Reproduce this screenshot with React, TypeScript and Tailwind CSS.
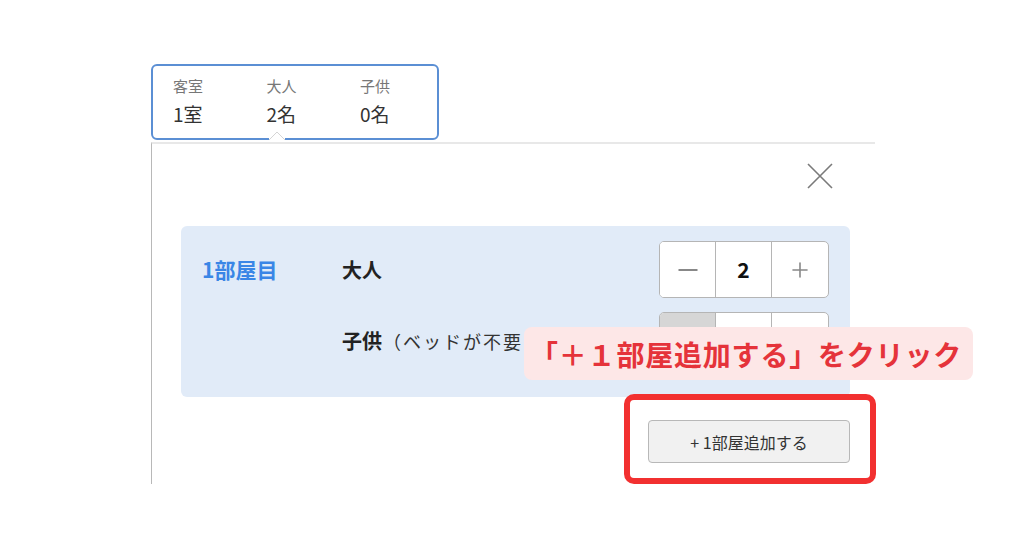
import { Minus, Plus } from 'lucide-react';

type SummaryProps = {
    label: string;
    value: string;
}

function SummaryItem(props: SummaryProps) {
    return (
        <div className="w-[93.5px] shrink-0 flex flex-col">
            <span className="text-[15px] leading-[20px] text-[#777]">{props.label}</span>
            <span className="text-[19px] leading-[26px] mt-[5px] text-[#333]">{props.value}</span>
        </div>
    )
}

type StepperProps = {
    value?: string;
    disabledMinus?: boolean;
}

function Stepper(props: StepperProps) {
    return (
        <div className="flex w-[170px] h-[57px] border border-[#b5b5b5] rounded-[5px] overflow-hidden bg-white">
            <div className={`w-[56px] flex items-center justify-center border-r border-[#b5b5b5] ${props.disabledMinus ? 'bg-[#d6d6d6]' : 'bg-white'}`}>
                {!props.disabledMinus && <Minus size={30} strokeWidth={1.6} className="text-[#888]" />}
            </div>
            <div className="w-[56px] flex items-center justify-center border-r border-[#b5b5b5] text-[21px] font-bold text-[#111]">
                {props.value}
            </div>
            <div className="flex-1 flex items-center justify-center">
                {props.value && <Plus size={24} strokeWidth={1.6} className="text-[#888]" />}
            </div>
        </div>
    )
}

export default function App() {
    return (
        <div
            className="relative w-[1024px] h-[538px] bg-white overflow-hidden"
            style={{ fontFamily: '"Noto Sans CJK JP", "Noto Sans", sans-serif' }}
        >
            <div className="pl-[151px] pt-[64px]">
                {/* summary box */}
                <div className="relative w-[288px] h-[76px] border-2 border-[#5b8fd4] rounded-[6px] flex pl-[20px] pt-[10px] bg-white">
                    <SummaryItem label="客室" value="1室" />
                    <SummaryItem label="大人" value="2名" />
                    <SummaryItem label="子供" value="0名" />
                    <div className="absolute left-[116px] bottom-[-2px] w-[16px] h-[9px] bg-white">
                        <svg width="16" height="9" viewBox="0 0 16 9">
                            <path d="M0 9 L8 1 L16 9" fill="white" stroke="#d5d5d5" strokeWidth="1" />
                        </svg>
                    </div>
                </div>

                {/* panel */}
                <div className="relative mt-[2px] w-[724px] h-[342px] border-t-2 border-t-[#e8e8e8] border-l border-l-[#b8b8b8] flex flex-col">
                    <div className="flex justify-end pr-[42px] pt-[19px] h-[82px]">
                        <svg width="26" height="26" viewBox="0 0 26 26">
                            <path d="M1 1 L25 25 M25 1 L1 25" stroke="#7a7a7a" strokeWidth="1.6" />
                        </svg>
                    </div>

                    <div className="ml-[29px] w-[669px] h-[171px] bg-[#e1ebf8] rounded-[6px] pl-[21px] pr-[21px] pt-[15px] flex flex-col gap-[14px]">
                        <div className="flex items-center h-[57px]">
                            <span className="w-[140px] text-[21px] font-bold text-[#3a86e6]">1部屋目</span>
                            <span className="flex-1 text-[20px] font-bold text-[#222]">大人</span>
                            <Stepper value="2" />
                        </div>
                        <div className="flex items-center h-[57px]">
                            <span className="w-[140px]"></span>
                            <span className="flex-1 flex items-baseline text-[#222] whitespace-nowrap">
                                <span className="text-[20px] font-bold">子供</span>
                                <span className="text-[18px] tracking-[2px] text-[#333] ml-[1px]">（ベッドが不要</span>
                            </span>
                            <Stepper disabledMinus />
                        </div>
                    </div>

                    <div className="flex justify-end w-[698px] mt-[23px]">
                        <div className="relative">
                            <button className="w-[202px] h-[43px] bg-[#f1f1f1] border border-[#b8b8b8] rounded-[4px] text-[16px] text-[#333]">
                                + 1部屋追加する
                            </button>
                            <div className="absolute left-[-24px] top-[-26px] w-[252px] h-[90px] border-[6px] border-[#f23030] rounded-[10px]"></div>
                        </div>
                    </div>
                </div>
            </div>

            {/* callout annotation */}
            <div className="absolute left-[524px] top-[327px] w-[449px] h-[53px] bg-[#fde7e7] rounded-[8px] flex items-center pl-[6px]">
                <span className="text-[28px] tracking-[0.8px] font-bold text-[#e5333a] leading-none whitespace-nowrap">「＋１部屋追加する」をクリック</span>
            </div>
        </div>
    )
}
